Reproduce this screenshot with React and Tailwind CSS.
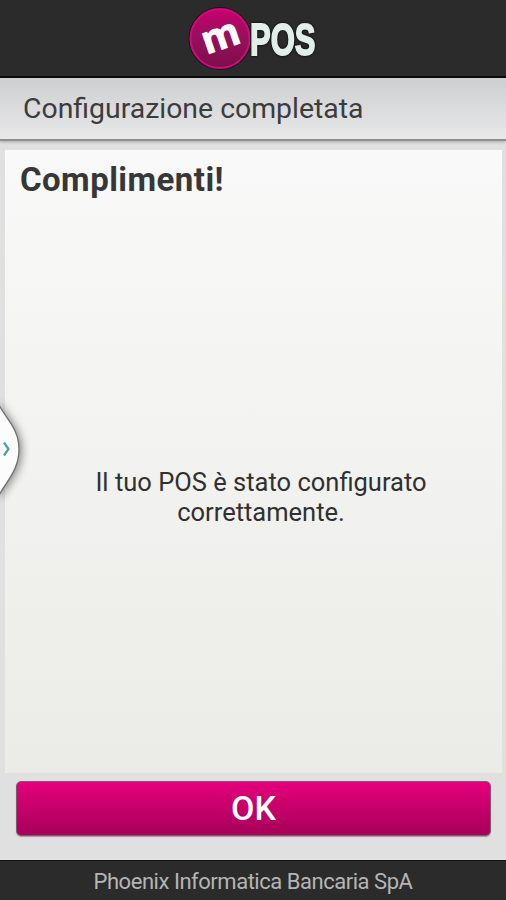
import React from "react";

function Logo() {
  return (
    <svg
      className="overflow-visible"
      width="136"
      height="70"
      viewBox="0 0 136 70"
      role="img"
      aria-label="mPOS"
    >
      <defs>
        <linearGradient id="badge" x1="0" y1="0" x2="0" y2="1">
          <stop offset="0" stopColor="#c70070" />
          <stop offset="0.5" stopColor="#96105b" />
          <stop offset="1" stopColor="#7d0d4b" />
        </linearGradient>
      </defs>
      <circle cx="35" cy="34.5" r="31.5" fill="#151515" />
      <circle cx="35" cy="34.5" r="29.5" fill="url(#badge)" stroke="#d20a7c" strokeWidth="2" />
      <text
        x="36"
        y="45.5"
        transform="rotate(-19 35 34.5)"
        textAnchor="middle"
        fill="#fff"
        stroke="#fff"
        strokeWidth="0.8"
        className="font-['Open_Sans',sans-serif] text-[39px] font-bold"
      >
        m
      </text>
      <text
        transform="translate(65 50.5) scale(0.69 1)"
        fill="#e2eee9"
        stroke="#e2eee9"
        strokeWidth="1.8"
        className="font-['Liberation_Sans',sans-serif] text-[45px] font-bold drop-shadow-[0_0_1.5px_#000]"
      >
        POS
      </text>
    </svg>
  );
}

/* === Side drawer handle === */
function DrawerHandle() {
  return (
    <svg
      className="absolute left-0 top-[395px]"
      width="34"
      height="108"
      viewBox="0 0 34 108"
    >
      <path
        d="M-2 8 C5 23 19 33 19 54 C19 75 7 85 -2 102 Z"
        fill="#fcfcfc"
        stroke="#707070"
        strokeWidth="1.3"
        className="drop-shadow-[2px_1px_4px_rgba(0,0,0,0.45)]"
      />
      <path d="M4 47.5 L8.5 54 L4 60.5" fill="none" stroke="#4f9bb5" strokeWidth="2.2" />
    </svg>
  );
}

export default function App() {
  return (
    <div className="relative flex h-[900px] w-[506px] flex-col overflow-hidden bg-[#e0e0e1] font-[Roboto,sans-serif]">
      {/* === Header === */}
      <header className="flex h-[78px] shrink-0 justify-center border-b-2 border-[#0c0c0c] bg-[#2b2b2b] pt-1">
        <Logo />
      </header>

      {/* === Title bar === */}
      <div className="flex h-[63px] shrink-0 items-center border-b-2 border-[#8f8f90] bg-linear-to-b from-[#cecfd1] to-[#e8e8e9] pt-[2px] pl-[23px] shadow-[0_1px_3px_rgba(0,0,0,0.25)]">
        <h1 className="text-[28.4px] text-[#3c3c3c]">Configurazione completata</h1>
      </div>

      {/* === Content === */}
      <main className="mt-[9px] mr-1 ml-[5px] flex h-[623px] shrink-0 flex-col bg-linear-to-b from-[#f9f9f9] to-[#ebece7]">
        <h2 className="pt-[10px] pl-[15px] text-[33px] leading-[40px] font-bold tracking-[0.45px] text-[#373737]">
          Complimenti!
        </h2>
        <p className="mt-[268px] pl-[15px] text-center text-[25.5px] leading-[29.5px] text-[#303030]">
          Il tuo POS è stato configurato
          <br />
          correttamente.
        </p>
      </main>

      <div className="px-4 pt-[8px]">
        <button className="flex h-[55px] w-[475px] items-center justify-center rounded-[5px] border border-[#85566f] bg-linear-to-b from-[#e5007d] to-[#a70059] text-[34px] font-medium text-white shadow-[0_1px_1px_rgba(0,0,0,0.3)]">
          OK
        </button>
      </div>

      {/* === Footer === */}
      <footer className="mt-auto flex h-[40px] shrink-0 items-center justify-center border-t border-[#151515] bg-[#2b2b2b] pt-[2px] text-[22px] tracking-[-0.47px] text-[#b5b5b5]">
        Phoenix Informatica Bancaria SpA
      </footer>

      <DrawerHandle />
    </div>
  );
}
